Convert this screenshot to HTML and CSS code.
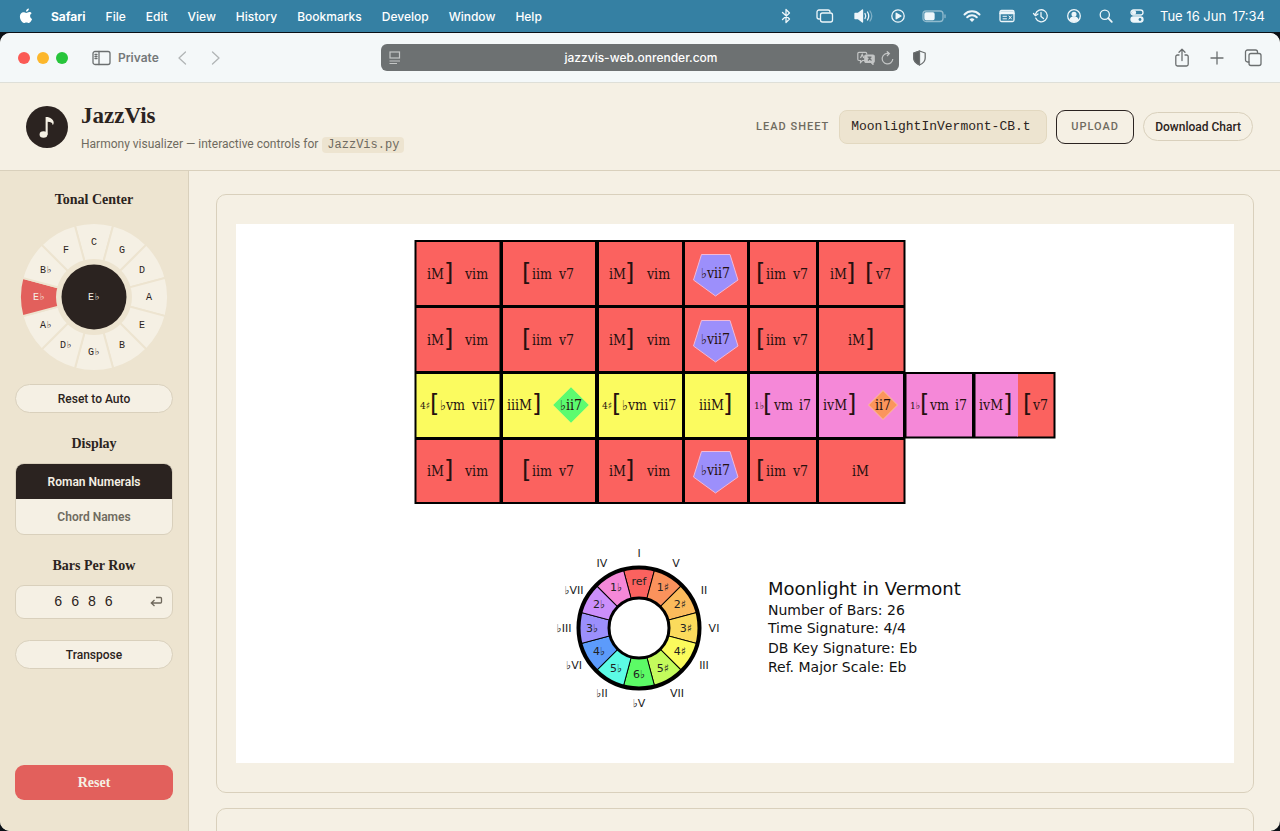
FILE: index.html
```html
<!DOCTYPE html>
<html lang="en">
<head>
<meta charset="utf-8">
<title>JazzVis</title>
<link rel="stylesheet" href="styles.css">
</head>
<body class="desktop">

<div class="menubar">
  <svg class="apple" width="14" height="16" viewBox="0 0 14 16" fill="#fff" aria-hidden="true"><path d="M9.9 0.4c.1 1.700-1.300 3.200-2.900 3.200-.2-1.600 1.300-3.100 2.900-3.200zM12.700 5.300c-1 .600-1.600 1.500-1.600 2.700 0 1.400.8 2.500 2 3-.5 1.600-1.800 3.900-3.300 3.900-.9 0-1.300-.5-2.400-.5s-1.500.5-2.400.5C3 14.900.9 11.600.9 8.600c0-2.800 1.700-4.400 3.500-4.400 1.200 0 2 .7 2.900.7.8 0 1.700-.8 3.100-.8.9 0 1.800.5 2.300 1.200z"/></svg>
  <nav class="menus">
    <button class="menu menu-app">Safari</button>
    <button class="menu">File</button>
    <button class="menu">Edit</button>
    <button class="menu">View</button>
    <button class="menu">History</button>
    <button class="menu">Bookmarks</button>
    <button class="menu">Develop</button>
    <button class="menu">Window</button>
    <button class="menu">Help</button>
  </nav>
  <div class="status">
    <svg width="20" height="16" viewBox="0 0 20 16" class="ln"><path d="M6.500 4.500l7 6.500-3.500 3.500v-13l3.500 3.500-7 6.500"/></svg>
    <svg width="26" height="16" viewBox="0 0 26 16" class="ln"><path d="M7.500 11H7A2 2 0 0 1 5 9V4a2 2 0 0 1 2-2h9a2 2 0 0 1 2 2"/><rect x="8.500" y="5" width="12" height="9" rx="2"/></svg>
    <svg width="20" height="16" viewBox="0 0 20 16" class="ln"><path class="solid" d="M1 5.500h3L8.500 2v12L4 10.500H1z"/><path d="M11 5.500q1.500 2.500 0 5M13.500 4q2.500 4 0 8"/><path opacity=".4" d="M16 3q3.500 5 0 10"/></svg>
    <svg width="16" height="16" viewBox="0 0 16 16" class="ln"><circle cx="8" cy="8" r="6.200"/><path class="solid" d="M6.200 5.200v5.600L11 8z"/></svg>
    <svg width="24" height="16" viewBox="0 0 24 16" class="ln"><rect x="1" y="3" width="20" height="10.500" rx="3" opacity=".5"/><rect class="solid" x="3" y="5" width="9" height="6.500" rx="1"/><path opacity=".5" d="M23 7v2.500"/></svg>
    <svg width="20" height="16" viewBox="0 0 20 16" class="ln thick"><path d="M2.500 6.500a10.500 10.500 0 0 1 15 0M5.200 9.200a6.800 6.800 0 0 1 9.600 0"/><path class="solid" d="M10 14l-2.500-2.600a3.600 3.600 0 0 1 5 0z" stroke="none"/></svg>
    <svg width="18" height="16" viewBox="0 0 18 16" class="ln"><rect x="2" y="2.500" width="14" height="11" rx="1.500"/><path d="M2 5.500h14M2.500 4h13"/><path d="M5 8.300h3.500M5 10.800h3.500M11 8l2.500 3M13.500 8l-2.500 3" stroke-width="1"/></svg>
    <svg width="18" height="16" viewBox="0 0 18 16" class="ln"><path d="M3.500 6.200a6 6 0 1 1 .3 4M1.500 5.500l2 2.200L6 6M9 4.500V8.500l2.500 2"/></svg>
    <svg width="16" height="16" viewBox="0 0 16 16" class="ln"><circle cx="8" cy="8" r="6.300"/><circle class="solid" cx="8" cy="6.300" r="1.900"/><path class="solid" d="M4 12q.5-2.800 4-2.800t4 2.800q-4 2.800-8 0z"/></svg>
    <svg width="16" height="16" viewBox="0 0 16 16" class="ln"><circle cx="6.800" cy="6.800" r="4.600"/><path d="M10.200 10.200l3.600 3.600" stroke-width="1.800"/></svg>
    <svg width="14" height="16" viewBox="0 0 14 16" class="ln"><rect x="1" y="2" width="12" height="5" rx="2.500"/><circle class="solid" cx="4" cy="4.500" r="1.500"/><rect class="solid" x="1" y="9" width="12" height="5" rx="2.500"/><circle cx="10" cy="11.500" r="1.400" fill="#3580a3" stroke="none"/></svg>
    <time class="clock"><span>Tue 16 Jun</span><span>17:34</span></time>
  </div>
</div>

<div class="window">
  <div class="toolbar">
    <div class="toolbar-left">
      <div class="lights"><i class="light red"></i><i class="light amber"></i><i class="light green"></i></div>
      <button class="private"><svg width="19" height="16" viewBox="0 0 19 16" class="tb"><rect x="1" y="1.500" width="17" height="13" rx="2"/><path d="M7 1.500v13M3 4.500h2M3 6.500h2M3 8.500h2"/></svg>Private</button>
      <button class="chev" aria-label="Back"><svg width="10" height="16" viewBox="0 0 10 16" class="tb pale"><path d="M8.500 2L2 8l6.500 6"/></svg></button>
      <button class="chev" aria-label="Forward"><svg width="10" height="16" viewBox="0 0 10 16" class="tb pale"><path d="M1.500 2L8 8l-6.500 6"/></svg></button>
    </div>
    <div class="address">
      <svg width="12" height="14" viewBox="0 0 12 14" class="ad"><rect x="1" y="1" width="9.500" height="6"/><path d="M.5 10h10.500M.5 12.500h7.500"/></svg>
      <span class="url">jazzvis-web.onrender.com</span>
      <svg width="18" height="14" viewBox="0 0 18 14" class="ad"><path d="M8 9.500H5.500L3.500 11.500V9.500H2A1.200 1.200 0 0 1 .8 8.300V2.500A1.200 1.200 0 0 1 2 1.300h6.500A1.200 1.200 0 0 1 9.700 2.500V3.500M3.500 7l1.700-3.500L6.800 7"/><path fill="#c4c6c6" d="M9 4h7a1.200 1.200 0 0 1 1.200 1.200v5a1.200 1.200 0 0 1-1.200 1.200v2l-2-2H9a1.200 1.200 0 0 1-1.200-1.200v-5A1.200 1.200 0 0 1 9 4z"/><path d="M10.500 6h4M11 9.500l3-3.500M11.500 6.500l3 3" stroke="#6d7172"/></svg>
      <svg width="13" height="14" viewBox="0 0 13 14" class="ad"><path d="M11.800 8a5.300 5.300 0 1 1-4-5.500M5.800.3l2.600 2.200-2.400 2.500"/></svg>
    </div>
    <button class="shield" aria-label="Privacy report"><svg width="15" height="16" viewBox="0 0 15 16" class="tb"><path d="M7.500 1l5.700 2v5c0 3.400-2.500 5.600-5.700 7-3.200-1.400-5.700-3.600-5.700-7V3z"/><path d="M7.500 1v14c-3.200-1.400-5.700-3.600-5.700-7V3z" fill="#5d6162"/></svg></button>
    <div class="toolbar-right">
      <button aria-label="Share"><svg width="16" height="20" viewBox="0 0 16 20" class="tb"><path d="M5 7H3.500A1.700 1.700 0 0 0 1.800 8.700v7.600A1.700 1.700 0 0 0 3.500 18h9a1.700 1.700 0 0 0 1.700-1.700V8.700A1.700 1.700 0 0 0 12.500 7H11M8 12.500V1.500M5 4.300l3-3 3 3"/></svg></button>
      <button aria-label="New tab"><svg width="16" height="20" viewBox="0 0 16 20" class="tb"><path d="M8 4v12M2 10h12"/></svg></button>
      <button aria-label="Tab overview"><svg width="18" height="20" viewBox="0 0 18 20" class="tb"><path d="M5 14H3.500a2 2 0 0 1-2-2V4a2 2 0 0 1 2-2h8a2 2 0 0 1 2 2v1"/><rect x="5" y="5.500" width="12" height="12" rx="2"/></svg></button>
    </div>
  </div>

  <header class="app-header">
    <svg class="logo" width="42" height="42" viewBox="0 0 42 42" aria-hidden="true"><circle cx="21" cy="21" r="21" fill="#2b2320"/><g fill="#f5f0e4"><ellipse cx="17.500" cy="28.500" rx="3.900" ry="3.300"/><path d="M19.600 11h1.700c1.500.1 6.400 1.800 6.400 5.600 0 1.200-.3 2-.9 2.600-.2-2.700-2.300-3.300-5.100-3.400v13h-2.100z"/></g></svg>
    <div class="brand">
      <h1>JazzVis</h1>
      <p>Harmony visualizer — interactive controls for <code>JazzVis.py</code></p>
    </div>
    <form class="sheet">
      <label for="sheet">LEAD SHEET</label>
      <input id="sheet" class="sheet-input" type="text" value="MoonlightInVermont-CB.t">
      <button type="button" class="upload">UPLOAD</button>
      <button type="button" class="pill">Download Chart</button>
    </form>
  </header>

  <div class="app-body">
    <aside class="sidebar">
      <h2>Tonal Center</h2>
      <svg class="tonal" width="148" height="148" viewBox="-74 -74 148 148" role="img" aria-label="Tonal center wheel">
        <defs><path id="wedge" d="M-19.200-71.500A74 74 0 0 1 19.200-71.500L9.600-35.700A37 37 0 0 0-9.600-35.700z"/></defs>
        <g class="wedges">
          <use href="#wedge"/><use href="#wedge" transform="rotate(30)"/><use href="#wedge" transform="rotate(60)"/><use href="#wedge" transform="rotate(90)"/><use href="#wedge" transform="rotate(120)"/><use href="#wedge" transform="rotate(150)"/><use href="#wedge" transform="rotate(180)"/><use href="#wedge" transform="rotate(210)"/><use href="#wedge" transform="rotate(240)"/><use href="#wedge" class="active" transform="rotate(270)"/><use href="#wedge" transform="rotate(300)"/><use href="#wedge" transform="rotate(330)"/>
        </g>
        <circle r="32.500" fill="#2b2320"/>
        <g class="keys">
          <text x="0" y="-52">C</text><text x="28" y="-44">G</text><text x="48" y="-24">D</text><text x="55" y="3">A</text><text x="48" y="31">E</text><text x="28" y="51">B</text><text x="0" y="58">G♭</text><text x="-28" y="51">D♭</text><text x="-48" y="31">A♭</text><text class="on" x="-55" y="3">E♭</text><text x="-48" y="-24">B♭</text><text x="-28" y="-44">F</text>
          <text class="on" x="0" y="3">E♭</text>
        </g>
      </svg>
      <button class="pill wide">Reset to Auto</button>

      <h2 class="spaced">Display</h2>
      <div class="segmented">
        <button class="seg selected">Roman Numerals</button>
        <button class="seg">Chord Names</button>
      </div>

      <h2 class="spaced"><label for="bars">Bars Per Row</label></h2>
      <div class="bars">
        <input id="bars" type="text" value="6 6 8 6">
        <button aria-label="Apply"><svg width="13" height="12" viewBox="0 0 13 12"><path d="M6 1.500H10.500Q11.500 1.500 11.500 2.500V6Q11.500 7 10.500 7H1.500M4.500 4L1.300 7 4.500 10" fill="none" stroke="#6f685c" stroke-width="1.300"/></svg></button>
      </div>
      <button class="pill wide transpose">Transpose</button>
      <button class="reset">Reset</button>
    </aside>

    <main class="main">
      <section class="card">
        <svg class="chart" viewBox="0 0 998 539" role="img" aria-label="Moonlight in Vermont harmony chart">
          <rect width="998" height="539" fill="#fff"/>
          <path d="M178.500 16h491v264h-491zM668 148h151.500v66.500H668z" fill="#000"/>
          <g fill="#fb625f">
            <path d="M180.500 18h83v63h-83zM267 18h92v63h-92zM363 18h83v63h-83zM449 18h62v63h-62zM514 18h66v63h-66zM583 18h84.500v63H583z"/>
            <path d="M180.500 84h83v63h-83zM267 84h92v63h-92zM363 84h83v63h-83zM449 84h62v63h-62zM514 84h66v63h-66zM583 84h84.500v63H583z"/>
            <path d="M180.500 216h83v62h-83zM267 216h92v62h-92zM363 216h83v62h-83zM449 216h62v62h-62zM514 216h66v62h-66zM583 216h84.500v62H583z"/>
            <path d="M781 150h36.500v62.500H781z"/>
          </g>
          <path fill="#fbfb5f" d="M180.500 150h83v63h-83zM267 150h92v63h-92zM363 150h83v63h-83zM449 150h62v63h-62z"/>
          <path fill="#f588d8" d="M514 150h66v63h-66zM583 150h84v63H583zM670.500 150h65.500v62.500h-65.500zM739.500 150H782v62.500h-42.500z"/>
          <g fill="#9c8ffb" stroke="#f3b9d6" stroke-width="1">
            <path d="M465.500 30.500h28.500l8 25.500-22.500 16-22-16z"/>
            <path d="M465.500 96.500h28.500l8 25.500-22.500 16-22-16z"/>
            <path d="M465.500 227.500h28.500l8 25.500-22.500 16-22-16z"/>
          </g>
          <path fill="#5cfb6f" stroke="#c9fb70" d="M335 163l18 18-18 18-18-18z"/>
          <path fill="#fb955c" stroke="#fbc09a" d="M647 166.500l14.500 14.500-14.500 14.500-14.500-14.500z"/>

          <g class="chord">
            <text x="191" y="55">iM</text><text x="229" y="55">vim</text><text x="296" y="55">iim</text><text x="323" y="55">v7</text><text x="373" y="55">iM</text><text x="411" y="55">vim</text><text x="465" y="54">♭vii7</text><text x="530" y="55">iim</text><text x="557" y="55">v7</text><text x="594" y="55">iM</text><text x="640" y="55">v7</text>
            <text x="191" y="121">iM</text><text x="229" y="121">vim</text><text x="296" y="121">iim</text><text x="323" y="121">v7</text><text x="373" y="121">iM</text><text x="411" y="121">vim</text><text x="465" y="120">♭vii7</text><text x="530" y="121">iim</text><text x="557" y="121">v7</text><text x="612" y="121">iM</text>
            <text x="204" y="186">♭vm</text><text x="236" y="186">vii7</text><text x="271" y="186">iiiM</text><text x="324" y="186">♭ii7</text><text x="386" y="186">♭vm</text><text x="417" y="186">vii7</text><text x="463" y="186">iiiM</text><text x="538" y="186">vm</text><text x="563" y="186">i7</text><text x="587" y="186">ivM</text><text x="639" y="186">ii7</text><text x="694" y="186">vm</text><text x="719" y="186">i7</text><text x="743" y="186">ivM</text><text x="797" y="186">v7</text>
            <text x="191" y="252">iM</text><text x="229" y="252">vim</text><text x="296" y="252">iim</text><text x="323" y="252">v7</text><text x="373" y="252">iM</text><text x="411" y="252">vim</text><text x="465" y="251">♭vii7</text><text x="530" y="252">iim</text><text x="557" y="252">v7</text><text x="616" y="252">iM</text>
          </g>
          <g class="mark"><text x="184" y="185">4♯</text><text x="366" y="185">4♯</text><text x="518" y="185">1♭</text><text x="674" y="185">1♭</text></g>
          <g class="bracket">
            <text x="208" y="57">]</text><text x="286" y="57">[</text><text x="389" y="57">]</text><text x="520" y="57">[</text><text x="610" y="57">]</text><text x="629" y="57">[</text>
            <text x="208" y="123">]</text><text x="286" y="123">[</text><text x="389" y="123">]</text><text x="520" y="123">[</text><text x="629" y="123">]</text>
            <text x="194" y="188">[</text><text x="296" y="188">]</text><text x="376" y="188">[</text><text x="487" y="188">]</text><text x="527" y="188">[</text><text x="611" y="188">]</text><text x="684" y="188">[</text><text x="767" y="188">]</text><text x="787" y="188">[</text>
            <text x="208" y="254">]</text><text x="286" y="254">[</text><text x="389" y="254">]</text><text x="520" y="254">[</text>
          </g>

          <g transform="translate(403 404)">
            <defs><path id="slice" d="M-15.800-58.900A61 61 0 0 1 15.800-58.900L7.800-29A30 30 0 0 0-7.800-29z"/></defs>
            <g stroke="#000" stroke-width="1">
              <use href="#slice" fill="#fb625f"/><use href="#slice" fill="#fb925c" transform="rotate(30)"/><use href="#slice" fill="#fbbb5c" transform="rotate(60)"/><use href="#slice" fill="#fbdb5c" transform="rotate(90)"/><use href="#slice" fill="#fbfb5c" transform="rotate(120)"/><use href="#slice" fill="#c4fb5c" transform="rotate(150)"/><use href="#slice" fill="#5cfb66" transform="rotate(180)"/><use href="#slice" fill="#5cfbe5" transform="rotate(210)"/><use href="#slice" fill="#5c9bfb" transform="rotate(240)"/><use href="#slice" fill="#9b8ffb" transform="rotate(270)"/><use href="#slice" fill="#cb8ffb" transform="rotate(300)"/><use href="#slice" fill="#f588d8" transform="rotate(330)"/>
            </g>
            <circle r="60.500" fill="none" stroke="#000" stroke-width="4"/>
            <circle r="30" fill="none" stroke="#000" stroke-width="3"/>
            <g class="degree">
              <text x="0" y="-43">ref</text><text x="24" y="-37">1♯</text><text x="41" y="-20">2♯</text><text x="47" y="4">3♯</text><text x="41" y="27">4♯</text><text x="24" y="44">5♯</text><text x="0" y="50">6♭</text><text x="-23" y="44">5♭</text><text x="-40" y="27">4♭</text><text x="-47" y="4">3♭</text><text x="-40" y="-20">2♭</text><text x="-23" y="-37">1♭</text>
              <text x="0" y="-71">I</text><text x="37" y="-61">V</text><text x="65" y="-34">II</text><text x="75" y="4">VI</text><text x="65" y="41">III</text><text x="38" y="69">VII</text><text x="0" y="79">♭V</text><text x="-37" y="69">♭II</text><text x="-65" y="41">♭VI</text><text x="-75" y="4">♭III</text><text x="-65" y="-34">♭VII</text><text x="-37" y="-61">IV</text>
            </g>
          </g>
          <g class="info">
            <text class="info-title" x="532" y="371">Moonlight in Vermont</text>
            <text x="532" y="391">Number of Bars: 26</text>
            <text x="532" y="409">Time Signature: 4/4</text>
            <text x="532" y="429">DB Key Signature: Eb</text>
            <text x="532" y="448">Ref. Major Scale: Eb</text>
          </g>
        </svg>
      </section>
      <section class="card next"></section>
    </main>
  </div>
</div>
</body>
</html>
```
FILE: styles.css
```css
* { box-sizing: border-box; }

:root {
  --ink: #2b2320;
  --cream: #f5f0e4;
  --sand: #ede4d0;
  --line: #d9d0bc;
  --muted: #6f6b60;
  --coral: #e2605c;
  --ui: "Inter", "Liberation Sans", sans-serif;
  --sans: "Roboto", "Noto Sans", sans-serif;
  --serif: "Liberation Serif", serif;
  --mono: "Liberation Mono", "DejaVu Sans Mono", monospace;
}

.desktop {
  margin: 0;
  height: 100vh;
  display: flex;
  flex-direction: column;
  overflow: hidden;
  background: #0b1016;
  color: var(--ink);
  font-family: var(--sans);
}

button { font: inherit; color: inherit; background: none; border: 0; padding: 0; }
svg { display: block; flex: none; }

/* Menu bar */
.menubar {
  height: 32px;
  flex: none;
  display: flex;
  align-items: center;
  padding: 0 15px 0 19px;
  background: #3580a3;
  color: #fff;
  font-family: var(--ui);
  font-size: 12px;
}
.menus { display: flex; gap: 20px; margin-left: 18px; }
.menu { font-weight: 500; }
.menu-app { font-weight: 700; }
.status { margin-left: auto; display: flex; align-items: center; gap: 16px; }
.clock { width: 105px; display: flex; justify-content: space-between; font-size: 13px; line-height: 16px; white-space: nowrap; }
.ln { fill: none; stroke: #eef6fa; stroke-width: 1.3; stroke-linecap: round; stroke-linejoin: round; }
.thick { stroke-width: 2; }
.ln .solid { fill: #eef6fa; }

/* Browser window */
.window {
  flex: 1;
  min-height: 0;
  margin-top: 1px;
  display: flex;
  flex-direction: column;
  border-radius: 10px;
  overflow: hidden;
  background: var(--cream);
}
.toolbar {
  height: 50px;
  flex: none;
  display: grid;
  grid-template-columns: 1fr 518px 1fr;
  grid-template-areas: "left address right";
  align-items: center;
  padding: 0 18px;
  background: #f4f8f9;
  border-bottom: 1px solid #dedfd8;
  font-family: var(--ui);
}
.toolbar-left { grid-area: left; display: flex; align-items: center; }
.lights { display: flex; gap: 7px; margin-right: 24px; }
.light { width: 12px; height: 12px; border-radius: 50%; }
.red { background: #fb5a55; }
.amber { background: #fcb72c; }
.green { background: #27c53b; }
.private { display: flex; align-items: center; gap: 7px; margin-right: 18px; font-size: 12px; font-weight: 600; color: #75797a; }
.chev { margin-right: 24px; }
.tb { fill: none; stroke: #6b6f70; stroke-width: 1.3; stroke-linecap: round; stroke-linejoin: round; }
.pale { stroke: #b1b5b6; }
.address {
  grid-area: address;
  height: 27px;
  display: flex;
  align-items: center;
  gap: 6px;
  padding: 0 5px 0 8px;
  border-radius: 6px;
  background: #6d7172;
  color: #fff;
  font-size: 12px;
}
.url { flex: 1; text-align: center; padding-left: 24px; font-weight: 500; }
.ad { fill: none; stroke: #c4c6c6; stroke-width: 1.2; }
.shield { grid-area: right; justify-self: start; margin-left: 13px; }
.toolbar-right { grid-area: right; justify-self: end; display: flex; gap: 19px; }

/* App header */
.app-header {
  height: 88px;
  flex: none;
  display: flex;
  align-items: center;
  padding: 0 27px 0 26px;
  border-bottom: 1px solid var(--line);
}
.brand { margin: 3px 0 0 13px; }
.brand h1 { margin: 0; font: 700 23px/28px var(--serif); }
.brand p { margin: 4px 0 0; font-size: 12px; line-height: 20px; color: var(--muted); }
.brand code { margin-left: 1px; padding: 1px 5px; border-radius: 4px; background: var(--sand); font: 12px/14px var(--mono); }
.sheet { margin-left: auto; display: flex; align-items: center; }
.sheet label { margin-right: 10px; font-size: 11px; font-weight: 500; letter-spacing: 1px; color: var(--muted); }
.sheet-input {
  width: 208px;
  height: 34px;
  margin-right: 9px;
  padding: 0 11px;
  border: 1px solid #e2d8c0;
  border-radius: 8px;
  background: var(--sand);
  color: var(--ink);
  font: 13px var(--mono);
}
.upload {
  width: 78px;
  height: 34px;
  margin-right: 9px;
  border: 1px solid var(--ink);
  border-radius: 9px;
  color: var(--muted);
  font-size: 11px;
  font-weight: 500;
  letter-spacing: 1px;
}
.pill {
  height: 29px;
  padding: 0 11px;
  border: 1px solid var(--line);
  border-radius: 15px;
  background: var(--cream);
  font-size: 12px;
  font-weight: 500;
}

/* Sidebar */
.app-body { flex: 1; min-height: 0; display: flex; }
.sidebar {
  width: 189px;
  flex: none;
  display: flex;
  flex-direction: column;
  align-items: stretch;
  padding: 19px 15px 31px;
  background: var(--sand);
  border-right: 1px solid var(--line);
}
.sidebar h2 { margin: 0; text-align: center; font: 700 14px/20px var(--serif); }
.sidebar .spaced { margin-top: 21px; }
.tonal { align-self: center; margin: 13px 0; }
.wedges { fill: var(--cream); stroke: var(--sand); stroke-width: 2; }
.wedges .active { fill: var(--coral); }
.keys { font: 10px var(--mono); text-anchor: middle; fill: var(--ink); }
.keys .on { fill: var(--cream); }
.segmented { margin-top: 9px; display: flex; flex-direction: column; border: 1px solid var(--line); border-radius: 9px; overflow: hidden; background: var(--cream); }
.seg { height: 35px; font-size: 12px; font-weight: 600; color: var(--muted); }
.selected { background: var(--ink); color: var(--cream); }
.bars { margin-top: 9px; height: 34px; display: flex; align-items: center; padding: 0 9px; border: 1px solid var(--line); border-radius: 9px; background: var(--cream); }
.bars input { flex: 1; min-width: 0; padding: 0 8px 0 0; border: 0; background: none; text-align: center; color: var(--ink); font: 14px var(--mono); }
.transpose { margin-top: 21px; }
.reset { margin-top: auto; height: 35px; border-radius: 9px; background: var(--coral); color: var(--cream); font: 700 14px var(--serif); }

/* Main */
.main { flex: 1; min-width: 0; padding: 23px 26px 0 27px; overflow: hidden; }
.card { padding: 29px 19px; border: 1px solid var(--line); border-radius: 10px; }
.next { margin-top: 15px; height: 200px; }
.chart { width: 100%; height: auto; }
.chord { font: 14px "DejaVu Serif Condensed", "DejaVu Serif", serif; fill: #26100f; }
.mark { font: 10px "DejaVu Serif Condensed", "DejaVu Serif", serif; fill: #26100f; }
.bracket { font: 24px "DejaVu Sans", sans-serif; fill: #26100f; }
.degree { font: 11px "DejaVu Sans", sans-serif; text-anchor: middle; fill: #222; }
.info { font: 14px "DejaVu Sans", sans-serif; fill: #111; }
.info-title { font-size: 18px; }
```
